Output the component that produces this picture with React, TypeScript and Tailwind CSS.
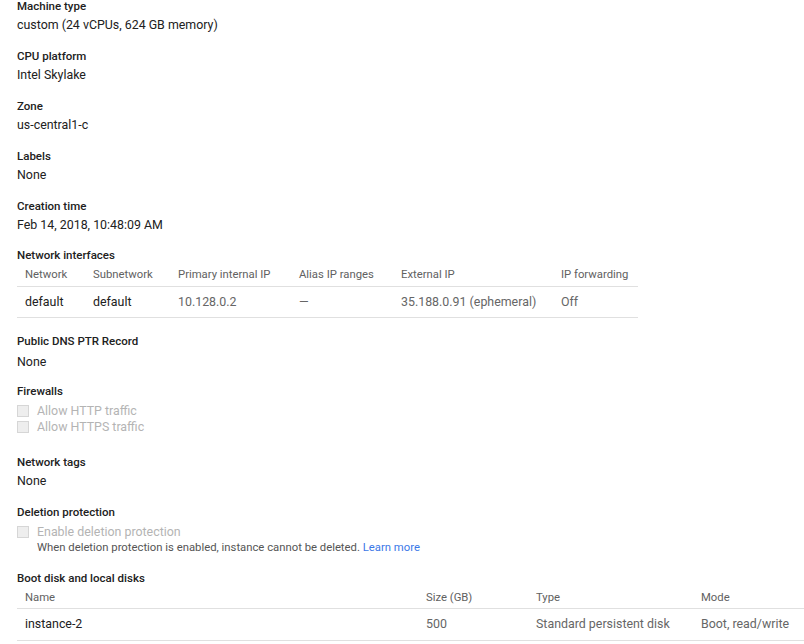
const netCols = [
  { label: 'Network', w: 'w-[68px]' },
  { label: 'Subnetwork', w: 'w-[85px]' },
  { label: 'Primary internal IP', w: 'w-[121px]' },
  { label: 'Alias IP ranges', w: 'w-[102px]' },
  { label: 'External IP', w: 'w-[160px]' },
  { label: 'IP forwarding', w: 'w-[85px]' },
];

const netRow = [
  { text: 'default', dark: true },
  { text: 'default', dark: true },
  { text: '10.128.0.2', dark: false },
  { text: '—', dark: false },
  { text: '35.188.0.91 (ephemeral)', dark: false },
  { text: 'Off', dark: false },
];

const diskCols = [
  { label: 'Name', w: 'w-[401px]' },
  { label: 'Size (GB)', w: 'w-[110px]' },
  { label: 'Type', w: 'w-[165px]' },
  { label: 'Mode', w: 'w-[150px]' },
];

const diskRow = [
  { text: 'instance-2', dark: true },
  { text: '500', dark: false },
  { text: 'Standard persistent disk', dark: false },
  { text: 'Boot, read/write', dark: false },
];

function Label({ children }: { children: React.ReactNode }) {
  return (
    <div className="h-[18px] leading-[18px] text-[11.5px] font-medium text-[#212121] whitespace-nowrap">
      {children}
    </div>
  );
}

function Value({ children }: { children: React.ReactNode }) {
  return (
    <div className="h-[20px] leading-[20px] text-[12.4px] text-[#212121]">
      {children}
    </div>
  );
}

function Field({ label, value, className = '' }: { label: string; value: string; className?: string }) {
  return (
    <div className={className}>
      <Label>{label}</Label>
      <Value>{value}</Value>
    </div>
  );
}

function Checkbox({ text }: { text: string }) {
  return (
    <div className="flex items-center h-[16px] leading-[16px] text-[12.4px] text-[#b4b4b4]">
      <span className="w-[12px] h-[12px] border border-[#d6d6d6] bg-[#eeeeee] mr-[8px]" />
      {text}
    </div>
  );
}

type Col = { label: string; w: string };
type Cell = { text: string; dark: boolean };

function Table({
  cols,
  row,
  head = 'h-[23px]',
  body = 'h-[31px]',
  className = '',
}: {
  cols: Col[];
  row: Cell[];
  head?: string;
  body?: string;
  className?: string;
}) {
  return (
    <div className={className}>
      <div className={`flex ${head} items-center border-b border-[#e0e0e0] text-[11.3px] text-[#616161]`}>
        {cols.map((c) => (
          <div key={c.label} className={`${c.w} shrink-0 pl-[8px] whitespace-nowrap`}>
            {c.label}
          </div>
        ))}
      </div>
      <div className={`flex ${body} items-center border-b border-[#e0e0e0] text-[12.4px]`}>
        {row.map((c, i) => (
          <div
            key={i}
            className={`${cols[i].w} shrink-0 pl-[8px] whitespace-nowrap ${c.dark ? 'text-[#212121]' : 'text-[#666666]'}`}
          >
            {c.text}
          </div>
        ))}
      </div>
    </div>
  );
}

export default function App() {
  return (
    <div
      className="w-[804px] h-[644px] overflow-hidden bg-white pl-[17px]"
      style={{ fontFamily: 'Roboto, "Liberation Sans", sans-serif' }}
    >
      <div className="-mt-[3px]">
        <Field label="Machine type" value="custom (24 vCPUs, 624 GB memory)" />
        <Field className="mt-[12px]" label="CPU platform" value="Intel Skylake" />
        <Field className="mt-[12px]" label="Zone" value="us-central1-c" />
        <Field className="mt-[12px]" label="Labels" value="None" />
        <Field className="mt-[12px]" label="Creation time" value="Feb 14, 2018, 10:48:09 AM" />

        <div className="mt-[11px]">
          <Label>Network interfaces</Label>
          <Table cols={netCols} row={netRow} className="w-[621px]" />
        </div>

        <div className="mt-[14px]">
          <Label>Public DNS PTR Record</Label>
          <div className="mt-[2px]">
            <Value>None</Value>
          </div>
        </div>

        <div className="mt-[10px]">
          <Label>Firewalls</Label>
          <div className="mt-[3px]">
            <Checkbox text="Allow HTTP traffic" />
            <Checkbox text="Allow HTTPS traffic" />
          </div>
        </div>

        <Field className="mt-[18px]" label="Network tags" value="None" />

        <div className="mt-[12px]">
          <Label>Deletion protection</Label>
          <div className="mt-[3px]">
            <Checkbox text="Enable deletion protection" />
            <div className="pl-[20px] h-[16px] leading-[16px] text-[11.3px] text-[#555555] whitespace-nowrap">
              When deletion protection is enabled, instance cannot be deleted.{' '}
              <a href="#" className="text-[#3b78e7]">
                Learn more
              </a>
            </div>
          </div>
        </div>

        <div className="mt-[13px]">
          <Label>Boot disk and local disks</Label>
          <Table
            cols={diskCols}
            row={diskRow}
            head="h-[22px] pt-[2px]"
            body="h-[32px]"
            className="w-[830px]"
          />
        </div>
      </div>
    </div>
  );
}
